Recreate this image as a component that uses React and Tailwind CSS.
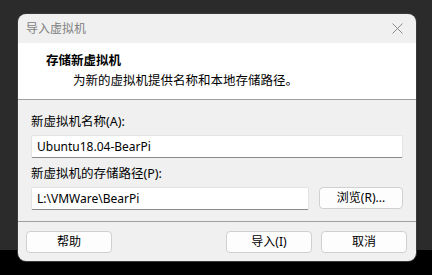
import React from "react";

const cjk = "font-['Segoe_UI','Noto_Sans','Noto_Sans_CJK_SC',sans-serif]";

const Btn = ({ children, className = "" }) => (
  <button
    className={`h-[22px] rounded-[4px] border border-[#d0d0d0] bg-[#fdfdfd] text-[12px] text-black leading-none ${className}`}
  >
    {children}
  </button>
);

const TextBox = ({ value, className = "" }) => (
  <div
    className={`h-[23px] bg-white border border-[#e4e4e4] border-b-[#8a8a8a] rounded-[2px] flex items-center px-[5px] text-[12px] text-black ${className}`}
  >
    {value}
  </div>
);

export default function App() {
  return (
    <div
      className={`w-[432px] h-[275px] bg-[linear-gradient(to_bottom,#2b2b2b_250px,#000_250px)] flex flex-col ${cjk}`}
    >
      <div className="flex-1 flex pt-[14px] pl-[18px]">
        <div className="w-[398px] h-[247px] bg-[#f0f0f0] rounded-[8px] overflow-hidden flex flex-col shadow-[0_0_0_1px_#3a3a3a]">
          {/* title bar */}
          <div className="h-[29px] flex items-center justify-between pl-[8px] pr-[11px]">
            <span className="text-[12px] text-[#808080]">导入虚拟机</span>
            <svg width="11" height="11" viewBox="0 0 11 11" className="mr-[2px]">
              <path d="M0.5 0.5L10.5 10.5M10.5 0.5L0.5 10.5" stroke="#8a8a8a" strokeWidth="1" />
            </svg>
          </div>

          {/* header */}
          <div className="h-[57px] bg-white border-b border-[#a0a0a0] pl-[28px] pt-[9px]">
            <div className="text-[12.5px] font-bold text-black leading-[18px]">存储新虚拟机</div>
            <div className="text-[12.5px] text-black leading-[18px] pl-[27px] mt-[2px]">
              为新的虚拟机提供名称和本地存储路径。
            </div>
          </div>

          {/* body */}
          <div className="flex-1 flex flex-col pl-[13px] pr-[13px] pt-[14px]">
            <div className="text-[12.5px] text-black leading-[16px]">新虚拟机名称(A):</div>
            <TextBox value="Ubuntu18.04-BearPi" className="mt-[5px] w-[372px]" />
            <div className="text-[12.5px] text-black leading-[16px] mt-[8px]">新虚拟机的存储路径(P):</div>
            <div className="flex items-start gap-[10px] mt-[5px]">
              <TextBox value="L:\VMWare\BearPi" className="w-[278px]" />
              <Btn className="w-[84px]">浏览(R)...</Btn>
            </div>
          </div>

          {/* footer */}
          <div className="h-[40px] border-t border-[#a0a0a0] flex items-start pt-[9px] pl-[8px] pr-[9px]">
            <Btn className="w-[86px]">帮助</Btn>
            <div className="flex-1" />
            <Btn className="w-[86px]">导入(I)</Btn>
            <Btn className="w-[86px] ml-[9px]">取消</Btn>
          </div>
        </div>
      </div>
    </div>
  );
}
